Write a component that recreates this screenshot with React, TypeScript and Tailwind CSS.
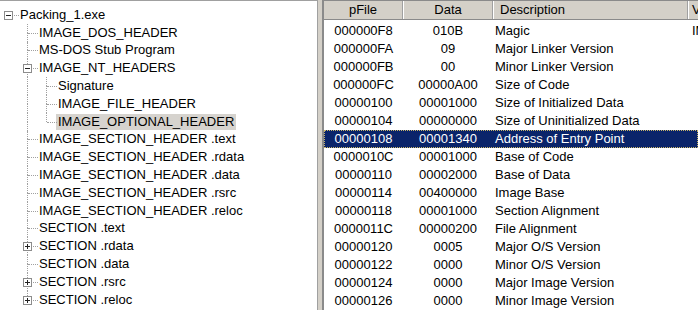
import React from 'react';

type TreeRow = {
  label: string;
  level: number;
  box?: 'plus' | 'minus';
  root?: boolean;
  last?: boolean;
  selected?: boolean;
};

const tree: TreeRow[] = [
  { label: 'Packing_1.exe', level: 0, box: 'minus', root: true },
  { label: 'IMAGE_DOS_HEADER', level: 1 },
  { label: 'MS-DOS Stub Program', level: 1 },
  { label: 'IMAGE_NT_HEADERS', level: 1, box: 'minus' },
  { label: 'Signature', level: 2 },
  { label: 'IMAGE_FILE_HEADER', level: 2 },
  { label: 'IMAGE_OPTIONAL_HEADER', level: 2, last: true, selected: true },
  { label: 'IMAGE_SECTION_HEADER .text', level: 1 },
  { label: 'IMAGE_SECTION_HEADER .rdata', level: 1 },
  { label: 'IMAGE_SECTION_HEADER .data', level: 1 },
  { label: 'IMAGE_SECTION_HEADER .rsrc', level: 1 },
  { label: 'IMAGE_SECTION_HEADER .reloc', level: 1 },
  { label: 'SECTION .text', level: 1 },
  { label: 'SECTION .rdata', level: 1, box: 'plus' },
  { label: 'SECTION .data', level: 1 },
  { label: 'SECTION .rsrc', level: 1, box: 'plus' },
  { label: 'SECTION .reloc', level: 1, box: 'plus', last: true },
];

const fields = [
  ['000000F8', '010B', 'Magic', 'IMAGE_NT_OPTIONAL_HDR32_MAGIC'],
  ['000000FA', '09', 'Major Linker Version', ''],
  ['000000FB', '00', 'Minor Linker Version', ''],
  ['000000FC', '00000A00', 'Size of Code', ''],
  ['00000100', '00001000', 'Size of Initialized Data', ''],
  ['00000104', '00000000', 'Size of Uninitialized Data', ''],
  ['00000108', '00001340', 'Address of Entry Point', ''],
  ['0000010C', '00001000', 'Base of Code', ''],
  ['00000110', '00002000', 'Base of Data', ''],
  ['00000114', '00400000', 'Image Base', ''],
  ['00000118', '00001000', 'Section Alignment', ''],
  ['0000011C', '00000200', 'File Alignment', ''],
  ['00000120', '0005', 'Major O/S Version', ''],
  ['00000122', '0000', 'Minor O/S Version', ''],
  ['00000124', '0000', 'Major Image Version', ''],
  ['00000126', '0000', 'Minor Image Version', ''],
];

const SELECTED = 6;

// one 19px column of the tree's dotted connector lines
function Connector({
  up,
  down,
  right,
  box,
}: {
  up?: boolean;
  down?: boolean;
  right?: boolean;
  box?: 'plus' | 'minus';
}) {
  return (
    <div className="relative h-full w-[19px] shrink-0">
      {up && <div className="absolute left-[8px] top-0 h-1/2 border-l border-dotted border-[#a0a0a0]" />}
      {down && <div className="absolute bottom-0 left-[8px] top-1/2 border-l border-dotted border-[#a0a0a0]" />}
      {right && <div className="absolute left-[9px] right-0 top-1/2 border-t border-dotted border-[#a0a0a0]" />}
      {box && (
        <div className="absolute left-[4px] top-1/2 -mt-[4px] flex h-[9px] w-[9px] items-center justify-center border border-[#8c8c8c] bg-white">
          <div className="relative h-[1px] w-[5px] bg-[#222]">
            {box === 'plus' && <div className="absolute left-[2px] top-[-2px] h-[5px] w-[1px] bg-[#222]" />}
          </div>
        </div>
      )}
    </div>
  );
}

function TreeItem({ row }: { row: TreeRow }) {
  return (
    <div className="flex h-[17.8px] items-center">
      {row.level === 0 ? (
        <Connector right box={row.box} />
      ) : (
        <>
          <div className="h-full w-[19px] shrink-0" />
          {row.level === 2 && <Connector up down />}
          <Connector up down={!row.last} right box={row.box} />
        </>
      )}
      <span
        className={`-ml-[1px] h-[16px] whitespace-nowrap px-[2px] leading-[16px] text-black ${
          row.selected ? 'bg-[#d6d3ce]' : ''
        }`}
      >
        {row.label}
      </span>
    </div>
  );
}

export default function App() {
  return (
    <div className="flex h-[310px] w-[698px] overflow-hidden bg-white text-[13px] font-['Liberation_Sans',Arial,sans-serif]">
      <div className="h-full w-[317px] shrink-0 border-t border-[#a0a0a0] pt-[5px]">
        {tree.map((row) => (
          <TreeItem key={row.label} row={row} />
        ))}
      </div>

      <div className="h-full w-[1px] shrink-0 bg-[#a0a0a0]" />
      <div className="h-full w-[4px] shrink-0 bg-[#d4d0c8]" />
      <div className="h-full w-[2px] shrink-0 bg-[#8a8a8a]" />

      <div className="flex h-full min-w-0 flex-1 flex-col">
        <div className="flex h-[20px] shrink-0 border-y border-[#8a8a8a] bg-[#d4d0c8] leading-[18px] text-black">
          <div className="w-[79px] shrink-0 border-r border-[#a0a0a0] text-center">pFile</div>
          <div className="w-[90px] shrink-0 border-l border-r border-l-white border-r-[#a0a0a0] text-center">Data</div>
          <div className="w-[195px] shrink-0 border-l border-r border-l-white border-r-[#a0a0a0] pl-[6px]">Description</div>
          <div className="flex-1 overflow-hidden whitespace-nowrap border-l border-white pl-[3px]">Value</div>
        </div>
        <div className="pt-[2px]">
          {fields.map(([off, data, desc, value], i) => (
            <div
              key={off}
              className={`flex h-[18px] items-center whitespace-nowrap ${
                i === SELECTED
                  ? 'bg-[#0a246a] text-white outline outline-dotted outline-[#c8b56a] -outline-offset-1'
                  : 'text-black'
              }`}
            >
              <div className="w-[79px] shrink-0 text-center">{off}</div>
              <div className="w-[90px] shrink-0 text-center">{data}</div>
              <div className="w-[195px] shrink-0 pl-[2px]">{desc}</div>
              <div className="min-w-0 flex-1 overflow-hidden pl-[4px]">{value}</div>
            </div>
          ))}
        </div>
      </div>
    </div>
  );
}
